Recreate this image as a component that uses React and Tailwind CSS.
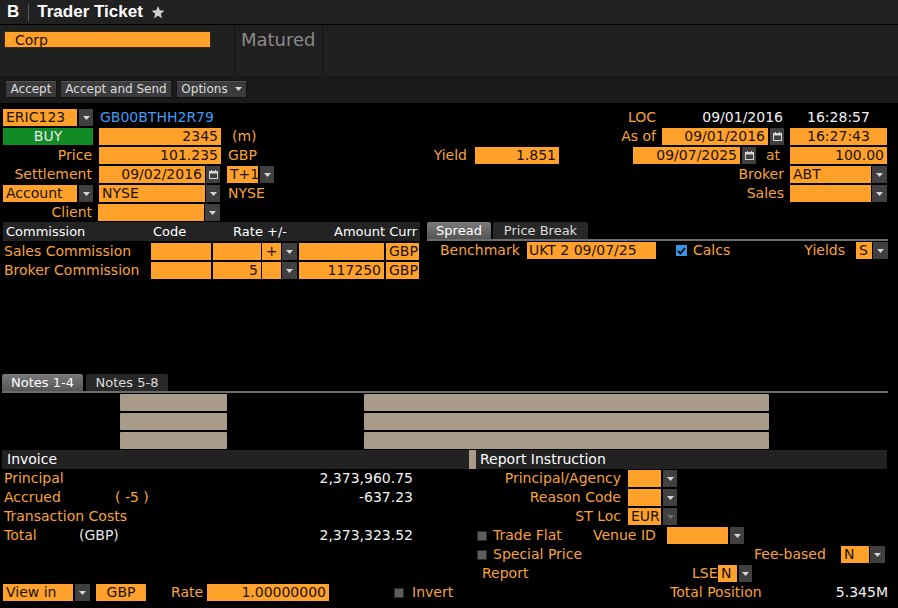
import React from "react";

const Tri = ({ color = "#d6d6d6" }) => (
  <svg width="7" height="4" viewBox="0 0 7 4">
    <path d="M0 0H7L3.5 4Z" fill={color} />
  </svg>
);

const Dd = ({ className = "w-[14px]", dim }) => (
  <div
    className={`${className} h-[17px] shrink-0 bg-[#404040] flex items-center justify-center`}
  >
    <Tri color={dim ? "#707070" : "#d6d6d6"} />
  </div>
);

const Cal = ({ className = "" }) => (
  <div
    className={`w-[14px] h-[17px] shrink-0 bg-[#404040] flex items-center justify-center ${className}`}
  >
    <svg width="9" height="9" viewBox="0 0 9 9">
      <rect x="0.5" y="1.5" width="8" height="7" fill="none" stroke="#d6d6d6" />
      <rect x="0.5" y="1.5" width="8" height="2" fill="#d6d6d6" />
      <rect x="2" y="0" width="1" height="2" fill="#d6d6d6" />
      <rect x="6" y="0" width="1" height="2" fill="#d6d6d6" />
    </svg>
  </div>
);

const Field = ({ className = "", children }) => (
  <div
    className={`h-[17px] shrink-0 bg-[#ffa12b] text-[#1c1306] px-[3px] leading-[17px] whitespace-nowrap overflow-hidden ${className}`}
  >
    {children}
  </div>
);

const Box = () => (
  <div className="w-[10px] h-[10px] shrink-0 bg-[#5e5e5e] border border-[#2c2c2c]" />
);

const Btn = ({ className = "", children }) => (
  <div
    className={`h-[18px] flex items-center justify-center bg-[#3b3b3b] border border-[#141414] shadow-[inset_0_1px_0_#555] text-[12px] text-[#dcdcdc] ${className}`}
  >
    {children}
  </div>
);

const Row = ({ className = "", children }) => (
  <div className={`h-[17px] flex items-center leading-[17px] whitespace-nowrap ${className}`}>
    {children}
  </div>
);

export default function App() {
  return (
    <div className="w-[898px] h-[608px] bg-black overflow-hidden font-['DejaVu_Sans',sans-serif] text-[14px] text-[#f7a33b]">
      {/* title bar */}
      <div className="h-[25px] bg-[#212121] border-b border-black flex items-center font-['Liberation_Sans',sans-serif] font-bold text-[17px] text-white">
        <span className="ml-[7px]">B</span>
        <div className="ml-[9px] w-px h-[17px] bg-[#5a5a5a]" />
        <span className="ml-[8px]">Trader Ticket</span>
        <svg className="ml-[8px]" width="14" height="13" viewBox="0 0 24 23">
          <path
            d="M12 0l3.1 7.6 8.2.6-6.3 5.3 2 8-7-4.4-7 4.4 2-8L.7 8.2l8.2-.6z"
            fill="#cfcfcf"
          />
        </svg>
      </div>

      {/* security strip */}
      <div className="h-[51px] bg-[#202020] flex">
        <div className="w-[234px] pt-[6px] pl-[4px]">
          <Field className="w-[207px] border border-[#3a2a10] pl-[10px] leading-[15px]">Corp</Field>
        </div>
        <div className="w-px bg-[#171717]" />
        <div className="w-[87px] pl-[6px] pt-[3px] text-[18px] leading-[24px] text-[#8a8a8a]">
          Matured
        </div>
        <div className="w-px bg-[#171717]" />
      </div>

      {/* toolbar */}
      <div className="h-[27px] bg-[#1a1a1a] flex items-start pt-[4px] pl-[5px]">
        <Btn className="w-[52px]">Accept</Btn>
        <Btn className="ml-[3px] w-[112px]">Accept and Send</Btn>
        <Btn className="ml-[4px] w-[71px] gap-[7px]">
          Options
          <Tri />
        </Btn>
      </div>

      {/* ticket form */}
      <div className="pt-[6px] flex">
        <div className="w-[420px] pl-[3px] flex flex-col gap-[2px]">
          <Row>
            <Field className="w-[74px]">ERIC123</Field>
            <Dd className="ml-[2px] w-[14px]" />
            <span className="ml-[7px] text-[#3f9df5]">GB00BTHH2R79</span>
          </Row>
          <Row>
            <div className="w-[90px] h-[17px] bg-[#128a25] text-[#e8e8e8] text-center">BUY</div>
            <Field className="ml-[6px] w-[122px] text-right">2345</Field>
            <span className="ml-[11px]">(m)</span>
          </Row>
          <Row>
            <span className="w-[89px] text-right">Price</span>
            <Field className="ml-[7px] w-[122px] text-right">101.235</Field>
            <span className="ml-[7px]">GBP</span>
          </Row>
          <Row>
            <span className="w-[89px] text-right">Settlement</span>
            <Field className="ml-[7px] w-[106px] text-right">09/02/2016</Field>
            <Cal className="ml-[1px]" />
            <Field className="ml-[7px] w-[31px]">T+1</Field>
            <Dd className="ml-[2px] w-[14px]" />
          </Row>
          <Row>
            <Field className="w-[74px]">Account</Field>
            <Dd className="ml-[2px] w-[14px]" />
            <Field className="ml-[6px] w-[106px]">NYSE</Field>
            <Dd className="ml-[1px] w-[14px]" />
            <span className="ml-[8px]">NYSE</span>
          </Row>
          <Row>
            <span className="w-[89px] text-right">Client</span>
            <Field className="ml-[6px] w-[106px]" />
            <Dd className="ml-[1px] w-[15px]" />
          </Row>
        </div>

        <div className="w-[180px] flex flex-col gap-[2px]">
          <Row />
          <Row />
          <Row>
            <span className="w-[47px] text-right">Yield</span>
            <Field className="ml-[8px] w-[84px] text-right">1.851</Field>
          </Row>
        </div>

        <div className="w-[298px] flex flex-col gap-[2px]">
          <Row>
            <span className="w-[56px] text-right">LOC</span>
            <span className="w-[127px] text-right text-[#f2f2f2]">09/01/2016</span>
            <span className="ml-[7px] w-[97px] text-center text-[#f2f2f2]">16:28:57</span>
          </Row>
          <Row>
            <span className="w-[56px] text-right">As of</span>
            <Field className="ml-[6px] w-[106px] text-right">09/01/2016</Field>
            <Cal className="ml-[2px]" />
            <Field className="ml-[6px] w-[97px] text-center">16:27:43</Field>
          </Row>
          <Row>
            <Field className="ml-[33px] w-[107px] text-right">09/07/2025</Field>
            <Cal className="ml-[2px]" />
            <span className="w-[34px] text-center">at</span>
            <Field className="w-[97px] text-right">100.00</Field>
          </Row>
          <Row>
            <span className="w-[184px] text-right">Broker</span>
            <Field className="ml-[6px] w-[81px]">ABT</Field>
            <Dd className="ml-[1px] w-[15px]" />
          </Row>
          <Row>
            <span className="w-[184px] text-right">Sales</span>
            <Field className="ml-[6px] w-[81px]" />
            <Dd className="ml-[1px] w-[15px]" />
          </Row>
        </div>
      </div>

      {/* commission + spread */}
      <div className="mt-[1px] flex">
        <div className="w-[424px] pl-[3px]">
          <div className="w-[417px] h-[19px] bg-[#232323] flex items-center text-[13px] text-white whitespace-nowrap">
            <span className="w-[148px] pl-[3px]">Commission</span>
            <span className="w-[60px] pl-[2px]">Code</span>
            <span className="w-[76px] text-right">Rate +/-</span>
            <span className="w-[130px] text-right">Amount Curr</span>
          </div>
          <div className="mt-[2px] flex flex-col gap-[2px]">
            <Row>
              <span className="w-[148px] pl-[1px]">Sales Commission</span>
              <Field className="w-[60px]" />
              <Field className="ml-[2px] w-[48px] text-right" />
              <Field className="ml-[1px] w-[19px] text-center">+</Field>
              <Dd className="ml-[1px] w-[15px]" />
              <Field className="ml-[2px] w-[85px] text-right" />
              <Field className="ml-[2px] w-[33px] px-[1px]">GBP</Field>
            </Row>
            <Row>
              <span className="w-[148px] pl-[1px]">Broker Commission</span>
              <Field className="w-[60px]" />
              <Field className="ml-[2px] w-[48px] text-right">5</Field>
              <Field className="ml-[1px] w-[19px] text-center" />
              <Dd className="ml-[1px] w-[15px]" />
              <Field className="ml-[2px] w-[85px] text-right">117250</Field>
              <Field className="ml-[2px] w-[33px] px-[1px]">GBP</Field>
            </Row>
          </div>
        </div>

        <div className="ml-[3px] w-[461px]">
          <div className="h-[17px] flex gap-[2px] text-[13px] leading-[17px]">
            <div className="w-[64px] bg-gradient-to-b from-[#7a7a7a] to-[#555] text-white text-center rounded-t-[2px]">
              Spread
            </div>
            <div className="w-[95px] bg-[#282828] text-[#dcdcdc] text-center rounded-t-[2px]">
              Price Break
            </div>
          </div>
          <div className="h-[2px] bg-[#6d6d6d]" />
          <Row className="mt-[1px]">
            <span className="w-[100px] pl-[13px]">Benchmark</span>
            <Field className="w-[129px] pl-[2px]">UKT 2 09/07/25</Field>
            <div className="ml-[20px] w-[11px] h-[11px] bg-[#3a93e8] flex items-center justify-center">
              <svg width="9" height="8" viewBox="0 0 9 8">
                <path d="M1 4l2.5 2.5L8 1" fill="none" stroke="#000" strokeWidth="1.8" />
              </svg>
            </div>
            <span className="ml-[6px]">Calcs</span>
            <span className="ml-auto">Yields</span>
            <Field className="ml-[11px] w-[16px] px-[1px]">S</Field>
            <Dd className="ml-[1px] w-[15px]" />
          </Row>
        </div>
      </div>

      {/* notes */}
      <div className="mt-[95px]">
        <div className="h-[17px] pl-[2px] flex gap-[3px] text-[13px] leading-[17px]">
          <div className="w-[81px] bg-gradient-to-b from-[#7a7a7a] to-[#555] text-white text-center rounded-t-[2px]">
            Notes 1-4
          </div>
          <div className="w-[82px] bg-[#282828] text-[#dcdcdc] text-center rounded-t-[2px]">
            Notes 5-8
          </div>
        </div>
        <div className="ml-[2px] w-[886px] h-[2px] bg-[#6d6d6d]" />
        <div className="mt-[1px] flex flex-col gap-[2px]">
          {[0, 1, 2].map((i) => (
            <div key={i} className="h-[17px] flex">
              <div className="ml-[120px] w-[107px] bg-[#a89b89] rounded-[1px]" />
              <div className="ml-[137px] w-[405px] bg-[#a89b89] rounded-[1px]" />
            </div>
          ))}
        </div>
      </div>

      {/* invoice + report instruction */}
      <div className="mt-[1px] h-[19px] flex text-white leading-[19px] text-[14px]">
        <div className="ml-[2px] w-[467px] bg-[#222] pl-[5px]">Invoice</div>
        <div className="w-[7px] bg-[#a89b89]" />
        <div className="w-[411px] bg-[#222] pl-[4px]">Report Instruction</div>
      </div>

      <div className="mt-[1px] flex">
        <div className="w-[476px] pl-[3px] flex flex-col gap-[2px]">
          <Row className="w-[410px]">
            <span className="pl-[1px]">Principal</span>
            <span className="ml-auto text-[#f2f2f2]">2,373,960.75</span>
          </Row>
          <Row className="w-[410px]">
            <span className="w-[112px] pl-[1px]">Accrued</span>
            <span>( -5 )</span>
            <span className="ml-auto text-[#f2f2f2]">-637.23</span>
          </Row>
          <Row className="w-[410px]">
            <span className="pl-[1px]">Transaction Costs</span>
          </Row>
          <Row className="w-[410px]">
            <span className="w-[76px] pl-[1px]">Total</span>
            <span className="text-[#e6e6e6]">(GBP)</span>
            <span className="ml-auto text-[#f2f2f2]">2,373,323.52</span>
          </Row>
        </div>

        <div className="w-[411px] flex flex-col gap-[2px]">
          <Row>
            <span className="w-[145px] text-right">Principal/Agency</span>
            <Field className="ml-[7px] w-[33px]" />
            <Dd className="ml-[2px] w-[14px]" />
          </Row>
          <Row>
            <span className="w-[145px] text-right">Reason Code</span>
            <Field className="ml-[7px] w-[33px]" />
            <Dd className="ml-[2px] w-[14px]" />
          </Row>
          <Row>
            <span className="w-[145px] text-right">ST Loc</span>
            <Field className="ml-[7px] w-[33px] px-[1px]">EUR</Field>
            <Dd className="ml-[2px] w-[14px]" dim />
          </Row>
          <Row>
            <div className="w-[117px] flex items-center">
              <div className="ml-[1px]">
                <Box />
              </div>
              <span className="ml-[6px]">Trade Flat</span>
            </div>
            <span className="w-[74px]">Venue ID</span>
            <Field className="w-[61px]" />
            <Dd className="ml-[2px] w-[14px]" />
          </Row>
          <Row>
            <div className="w-[278px] flex items-center">
              <div className="ml-[1px]">
                <Box />
              </div>
              <span className="ml-[6px]">Special Price</span>
            </div>
            <span className="w-[87px]">Fee-based</span>
            <Field className="w-[28px] px-[1px]">N</Field>
            <Dd className="ml-[1px] w-[15px]" />
          </Row>
          <Row>
            <span className="w-[216px] pl-[6px]">Report</span>
            <span className="w-[26px]">LSE</span>
            <Field className="w-[19px] px-[2px]">N</Field>
            <Dd className="ml-[2px] w-[13px]" />
          </Row>
        </div>
      </div>

      {/* bottom bar */}
      <Row className="mt-[2px] pl-[3px]">
        <Field className="w-[70px]">View in</Field>
        <Dd className="ml-[2px] w-[15px]" />
        <Field className="ml-[6px] w-[50px] text-center">GBP</Field>
        <span className="ml-[25px] w-[36px]">Rate</span>
        <Field className="w-[122px] text-right">1.00000000</Field>
        <div className="ml-[65px]">
          <Box />
        </div>
        <span className="ml-[8px]">Invert</span>
        <div className="ml-auto mr-[10px] w-[218px] flex justify-between">
          <span>Total Position</span>
          <span className="text-[#f2f2f2]">5.345M</span>
        </div>
      </Row>
    </div>
  );
}
